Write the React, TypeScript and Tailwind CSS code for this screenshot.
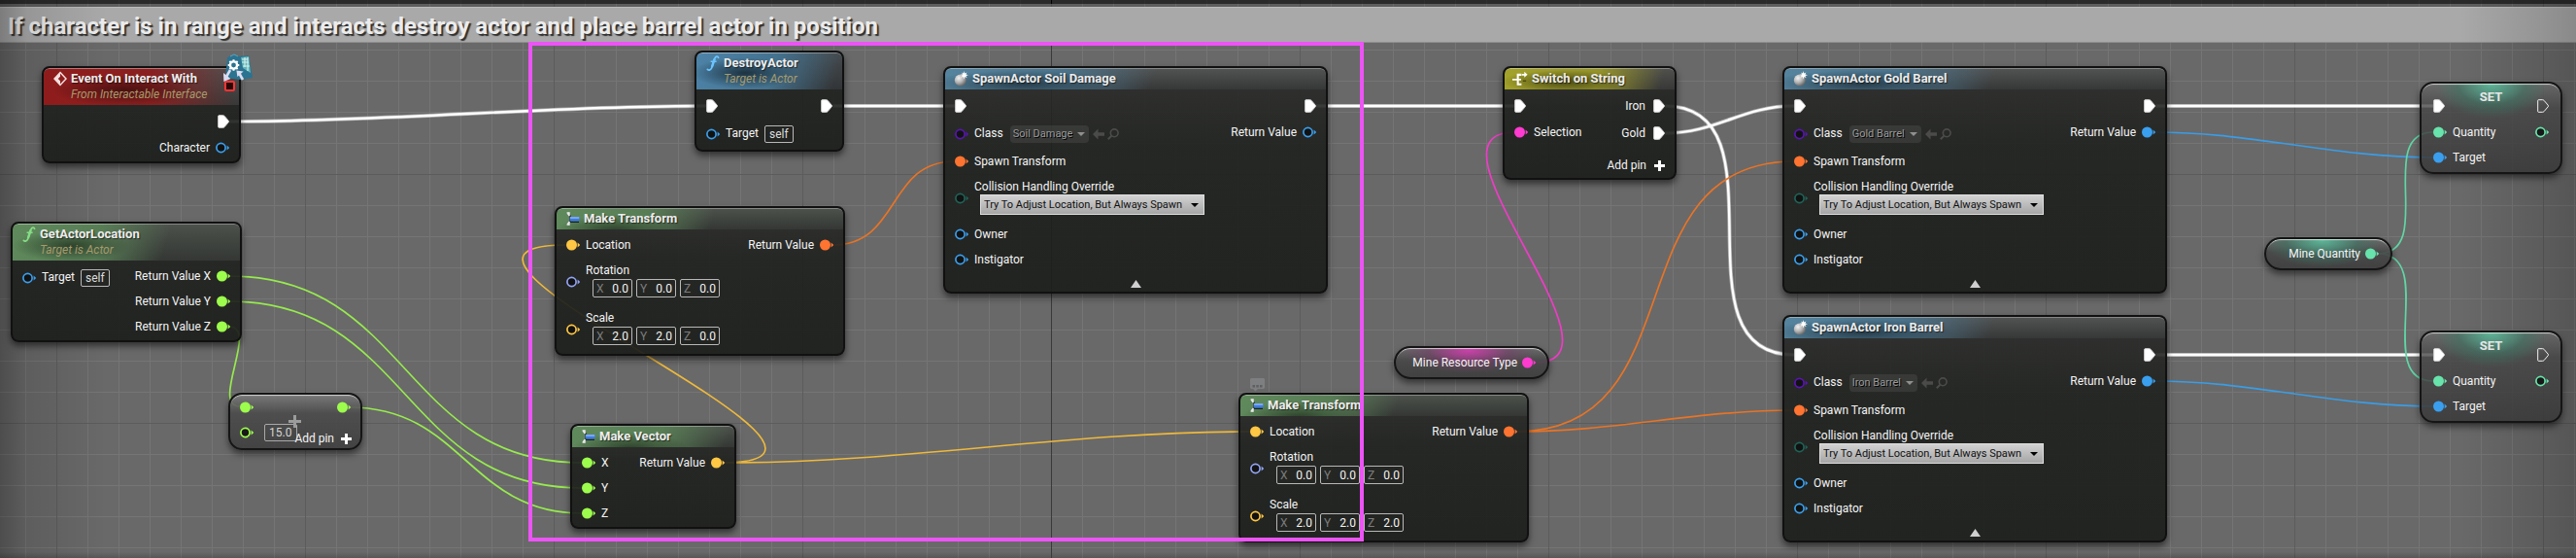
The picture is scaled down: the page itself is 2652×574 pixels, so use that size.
import React, { useId } from "react";

type Kind =
  | "object"
  | "float"
  | "vector"
  | "rotator"
  | "transform"
  | "string"
  | "int"
  | "class"
  | "enum";

const pinColor: Record<Kind, string> = {
  object: "#3a9fee",
  float: "#9dfd4d",
  vector: "#ffc744",
  rotator: "#93a4f4",
  transform: "#ff7430",
  string: "#ff3bd0",
  int: "#68e3ab",
  class: "#5a14b4",
  enum: "#1f6358",
};

const wireColor: Record<string, string> = {
  exec: "#ffffff",
  object: "#3a9de6",
  float: "#97ea4f",
  vector: "#eeb93c",
  transform: "#e87426",
  string: "#ee3cc6",
  int: "#60d6a6",
};

function Pin({ kind, on = false }: { kind: Kind; on?: boolean }) {
  const c = pinColor[kind];
  return (
    <svg className="h-3 w-[14px] shrink-0" viewBox="0 0 14 12" aria-hidden="true">
      {on ? (
        <circle cx="5.5" cy="6" r="5.5" fill={c} />
      ) : (
        <circle cx="5.5" cy="6" r="4.6" fill="#0c0e0d" fillOpacity="0.8" stroke={c} strokeWidth="1.7" />
      )}
      <path d="M11.6 3.4 14.2 6 11.6 8.6Z" fill={c} />
    </svg>
  );
}

function Exec({ on = true, out = false }: { on?: boolean; out?: boolean }) {
  return (
    <span className={out ? "flex w-[14px] shrink-0 justify-end" : "flex w-[14px] shrink-0"}>
      <svg className="h-[14px] w-3 shrink-0" viewBox="0 0 12 14" aria-hidden="true">
        <path
          d="M1.4.7H5.6Q6.4.7 7 1.3L11.2 6.2Q11.8 7 11.2 7.8L7 12.7Q6.4 13.3 5.6 13.3H1.4Q.7 13.3.7 12.6V1.4Q.7.7 1.4.7Z"
          fill={on ? "#ffffff" : "none"}
          stroke={on ? "#d8d8d8" : "#f4f4f4"}
          strokeWidth="1"
        />
      </svg>
    </span>
  );
}

function Plus() {
  return (
    <svg className="size-[11px] shrink-0" viewBox="0 0 11 11" aria-hidden="true">
      <path d="M4 0H7V4H11V7H7V11H4V7H0V4H4Z" fill="#ffffff" />
    </svg>
  );
}

function FunctionIcon({ className }: { className: string }) {
  return (
    <svg className={"h-4 w-[14px] shrink-0 " + className} viewBox="0 0 14 16" fill="none" stroke="currentColor" aria-hidden="true">
      <path d="M12.6 2.2C12 .6 9.8.5 8.8 3.2L5.8 12.6C5 15.2 2.6 15.6 1.4 14.4" strokeWidth="1.8" strokeLinecap="round" />
      <path d="M8.6 3.6 5.9 12" strokeWidth="2.4" />
      <path d="M4.6 6.2H10.6" strokeWidth="1.4" />
    </svg>
  );
}

function EventIcon() {
  return (
    <svg className="h-4 w-[14px] shrink-0" viewBox="0 0 14 16" aria-hidden="true">
      <path d="M7 1.6 13 8 7 14.4 1 8Z" fill="none" stroke="#f4dede" strokeWidth="1.5" />
      <path d="M7 1.6 1 8 7 14.4 7 10.2 4.8 8 7 5.8Z" fill="#f4dede" />
    </svg>
  );
}

function StructIcon() {
  return (
    <svg className="h-4 w-[14px] shrink-0" viewBox="0 0 14 16" aria-hidden="true">
      <path d="M1 2 4 5V8M1 14 4 11V8" stroke="#2c3436" strokeWidth="1.6" fill="none" />
      <path d="M.6 2H3V4.4M.6 14H3V11.6" stroke="#f3f3f3" strokeWidth="1.4" fill="none" />
      <path d="M1 2.3 3.4 5M1 13.7 3.4 11" stroke="#f3f3f3" strokeWidth="1.2" />
      <rect x="3.6" y="6" width="10" height="4.4" rx="1" fill="#3f7be0" />
      <rect x="3.8" y="6.2" width="9.6" height="1.5" rx=".7" fill="#8fb6ff" />
      <path d="M4 11.3H13" stroke="#16202c" strokeWidth="1.2" />
    </svg>
  );
}

function SpawnIcon() {
  const id = useId();
  return (
    <svg className="h-4 w-[14px] shrink-0 overflow-visible" viewBox="0 0 14 16" aria-hidden="true">
      <defs>
        <radialGradient id={id} cx="35%" cy="32%" r="70%">
          <stop offset="0" stopColor="#f2f2f2" />
          <stop offset=".55" stopColor="#b4b4b4" />
          <stop offset="1" stopColor="#6a6a6a" />
        </radialGradient>
      </defs>
      <circle cx="5.8" cy="9.4" r="6" fill={`url(#${id})`} />
      <path
        transform="translate(-1)"
        d="M10.6 0 11.3 2.6 13.4 1.4 12.4 3.6 15 4.2 12.5 5.1 13.6 7.2 11.3 6.1 10.5 8.4 9.7 6 7.6 6.8 8.8 4.8 6.8 3.8 9 3.4 8.2 1.4 10 2.6Z"
        fill="#ffffff"
      />
    </svg>
  );
}

function SwitchIcon() {
  return (
    <svg className="-ml-[2px] h-4 w-4 shrink-0" viewBox="0 0 17 16" fill="none" stroke="#ffffff" aria-hidden="true">
      <path d="M0 9H9.5" strokeWidth="1.8" />
      <path d="M10 3.6H6V14.2H10" strokeWidth="2.2" />
      <path d="M10.5 3.6H14" strokeWidth="1.8" />
      <path d="M13 .4 16.6 3.6 13 6.8Z" fill="#ffffff" stroke="none" />
      <path d="M11.5 10.4H15" stroke="#4e4c12" strokeWidth="1.6" />
    </svg>
  );
}

type Tone = "red" | "green" | "blue" | "spawn" | "yellow";

const toneClass: Record<Tone, string> = {
  red: "bg-[radial-gradient(ellipse_75px_16px_at_84px_22px,#3c0d0dd0,transparent),linear-gradient(to_right,#8f1c1c,#8a2020_110px,#3f3f3f00_198px),linear-gradient(#505050,#383838)]",
  green:
    "bg-[radial-gradient(ellipse_60px_16px_at_60px_22px,#1f2e1ec0,transparent),linear-gradient(105deg,#5f8a5c,#587d55_90px,#3f3f3f00_158px),linear-gradient(#4c514b,#343734)]",
  blue: "bg-[radial-gradient(ellipse_55px_16px_at_50px_20px,#14242ed0,transparent),linear-gradient(105deg,#4d83a8,#44728f_80px,#3f3f3f00_145px),linear-gradient(#454a4e,#323537)]",
  spawn:
    "bg-[radial-gradient(ellipse_95px_14px_at_80px_15px,#1c2a33c0,transparent),linear-gradient(105deg,#55849f,#4b748c_115px,#3f3f3f00_210px),linear-gradient(#515353,#363737)]",
  yellow:
    "bg-[radial-gradient(ellipse_65px_12px_at_62px_13px,#33320ec0,transparent),linear-gradient(105deg,#a3a22a,#94932a_95px,#3f3f3f00_160px),linear-gradient(#4f4f4c,#383838)]",
};

function Node({
  place,
  tone,
  icon,
  title,
  subtitle,
  children,
}: {
  place: string;
  tone: Tone;
  icon: React.ReactNode;
  title: string;
  subtitle?: string;
  children: React.ReactNode;
}) {
  return (
    <section
      className={
        "absolute overflow-hidden rounded-lg border-2 border-[#101110] bg-[linear-gradient(#2b2c2be6,#1f211ee8_35%,#1c1e1bec)] shadow-[0_4px_7px_#00000088] " +
        place
      }
    >
      <header
        className={
          "flex gap-1 rounded-t-md border-t border-t-white/40 pr-3 pl-[10px] " +
          (subtitle ? "h-[38px] " : "h-[22px] ") +
          toneClass[tone]
        }
      >
        <div className="mt-[2px] h-4">{icon}</div>
        <div className="pt-[2px]">
          <h2 className="text-[13px] leading-4 font-bold whitespace-nowrap text-[#ececec] [text-shadow:1px_1px_1px_#00000090]">{title}</h2>
          {subtitle && <p className="text-xs leading-[17px] whitespace-nowrap text-[#a79a6c] italic">{subtitle}</p>}
        </div>
      </header>
      <div className="flex justify-between px-[10px] pt-[3px] pb-px">{children}</div>
    </section>
  );
}

function Row({ h = "h-[26px]", out = false, children }: { h?: string; out?: boolean; children: React.ReactNode }) {
  return <div className={"flex items-center gap-[6px] " + (out ? "justify-end " : "") + h}>{children}</div>;
}

function Text({ children }: { children: React.ReactNode }) {
  return <span className="pb-px text-xs leading-4 whitespace-nowrap text-[#f4f4f4]">{children}</span>;
}

function Self() {
  return (
    <span className="h-[18px] rounded-xs border border-[#b8b8b8] px-1 text-xs leading-4 text-[#dcdcdc]">self</span>
  );
}

function VectorField({ name, kind, values }: { name: string; kind: Kind; values: string[] }) {
  return (
    <Row h="h-[49px]">
      <Pin kind={kind} />
      <div role="group" aria-label={name} className="flex flex-col gap-px pb-[3px]">
        <span className="text-xs leading-4 text-[#f4f4f4]">{name}</span>
        <div className="ml-[7px] flex gap-1">
          {["X", "Y", "Z"].map((axis, i) => (
            <label
              key={axis}
              className="flex h-[19px] w-[41px] items-center rounded-xs border border-[#b8b8b8] px-[3px] text-xs leading-4 text-[#7c7c7c]"
            >
              {axis}
              <input
                className="w-full min-w-0 bg-transparent text-right text-[#f4f4f4] outline-none"
                defaultValue={values[i]}
                inputMode="decimal"
              />
            </label>
          ))}
        </div>
      </div>
    </Row>
  );
}

function MakeTransform({ place, scale }: { place: string; scale: string[] }) {
  return (
    <Node place={place} tone="green" icon={<StructIcon />} title="Make Transform">
      <div>
        <Row>
          <Pin kind="vector" on />
          <Text>Location</Text>
        </Row>
        <VectorField name="Rotation" kind="rotator" values={["0.0", "0.0", "0.0"]} />
        <VectorField name="Scale" kind="vector" values={scale} />
      </div>
      <div>
        <Row out>
          <Text>Return Value</Text>
          <Pin kind="transform" on />
        </Row>
      </div>
    </Node>
  );
}

function SpawnActor({ place, actor, linked = false }: { place: string; actor: string; linked?: boolean }) {
  const id = useId();
  return (
    <Node place={place} tone="spawn" icon={<SpawnIcon />} title={`SpawnActor ${actor}`}>
      <div className="w-full">
        <div className="flex justify-between">
          <div>
            <Row h="h-7">
              <Exec />
            </Row>
            <Row h="h-[30px]">
              <Pin kind="class" />
              <label htmlFor={id + "c"} className="pb-[3px] text-xs leading-4 text-[#f4f4f4]">
                Class
              </label>
              <div className="relative ml-[1px] flex h-[18px] items-center rounded-sm bg-white/8">
                <select
                  id={id + "c"}
                  disabled
                  className="appearance-none bg-transparent pr-4 pl-[3px] text-[11px] leading-4 text-[#9a9a9a] opacity-100 [text-shadow:1px_1px_0_#000]"
                >
                  <option>{actor}</option>
                </select>
                <svg className="pointer-events-none absolute right-1 h-1 w-2" viewBox="0 0 8 4" aria-hidden="true">
                  <path d="M0 0H8L4 4Z" fill="#8f8f8f" />
                </svg>
              </div>
              <button type="button" disabled aria-label="Use selected asset" className="-ml-[2px]">
                <svg className="h-3 w-3" viewBox="0 0 12 12" aria-hidden="true">
                  <path d="M0 6 5.5.6V4.2H12V7.8H5.5V11.4Z" fill="#4b4c4a" />
                </svg>
              </button>
              <button type="button" disabled aria-label="Browse to asset" className="-ml-[3px]">
                <svg className="h-3 w-3" viewBox="0 0 12 12" fill="none" stroke="#4b4c4a" aria-hidden="true">
                  <circle cx="7.2" cy="4.8" r="3.9" strokeWidth="1.6" />
                  <path d="M4.4 7.6.8 11.2" strokeWidth="2" />
                </svg>
              </button>
            </Row>
            <Row>
              <Pin kind="transform" on />
              <Text>Spawn Transform</Text>
            </Row>
            <Row h="h-[49px]">
              <Pin kind="enum" />
              <div className="flex flex-col pb-[2px]">
                <label htmlFor={id + "h"} className="text-xs leading-4 whitespace-nowrap text-[#f4f4f4]">
                  Collision Handling Override
                </label>
                <div className="relative ml-[6px] flex h-[21px] w-[231px] items-center border border-[#dedede] bg-[linear-gradient(#d2d2d2,#a6a6a6)]">
                  <select
                    id={id + "h"}
                    className="w-full appearance-none bg-transparent pl-[3px] text-[11px] leading-4 text-[#101010]"
                  >
                    <option>Try To Adjust Location, But Always Spawn</option>
                  </select>
                  <svg className="pointer-events-none absolute right-[5px] h-1 w-2" viewBox="0 0 8 4" aria-hidden="true">
                    <path d="M0 0H8L4 4Z" fill="#000000" />
                  </svg>
                </div>
              </div>
            </Row>
            <Row>
              <Pin kind="object" />
              <Text>Owner</Text>
            </Row>
            <Row>
              <Pin kind="object" />
              <Text>Instigator</Text>
            </Row>
          </div>
          <div>
            <Row h="h-7" out>
              <Exec out />
            </Row>
            <Row out>
              <Text>Return Value</Text>
              <Pin kind="object" on={linked} />
            </Row>
          </div>
        </div>
        <div className="flex h-[19px] justify-center pt-2">
          <button type="button" aria-label="Hide advanced pins" className="h-2">
            <svg className="h-2 w-[11px]" viewBox="0 0 11 8" aria-hidden="true">
              <path d="M5.5 0 11 8H0Z" fill="#cfcfcf" />
            </svg>
          </button>
        </div>
      </div>
    </Node>
  );
}

const glass =
  "absolute overflow-hidden border-2 border-[#151515] shadow-[0_4px_7px_#00000080,inset_0_2px_1px_-1px_#ffffffb0] ";

function VariableNode({ place, kind, name }: { place: string; kind: "string" | "int"; name: string }) {
  return (
    <section
      className={
        glass +
        "flex h-[34px] items-center justify-end gap-[5px] rounded-full pr-[12px] " +
        (kind === "string"
          ? "bg-[radial-gradient(ellipse_44%_75%_at_48%_10%,#d63cb2e0,#7a3a6c80_60%,transparent),linear-gradient(#6a6a6aee,#464646e6_45%,#3d3d3de6)] "
          : "bg-[radial-gradient(ellipse_48%_90%_at_45%_5%,#5cc09fe0,#3a7a6680_60%,transparent),linear-gradient(#6a6a6aee,#464646e6_45%,#3d3d3de6)] ") +
        place
      }
    >
      <Text>{name}</Text>
      <Pin kind={kind} on />
    </section>
  );
}

function SetNode({ place }: { place: string }) {
  return (
    <section
      className={
        glass +
        "h-[95px] w-[147px] rounded-[14px] bg-[radial-gradient(ellipse_58px_36px_at_72px_0px,#5cc09fe0,#3a7a6680_60%,transparent),linear-gradient(#6a6a6ad0,#464646d0_28%,#383838d8)] " +
        place
      }
    >
      <h2 className="absolute inset-x-0 top-[6px] text-center text-[13px] leading-4 font-bold text-[#e6e6e6]">SET</h2>
      <div className="flex justify-between px-3 pt-[9px]">
        <div>
          <Row h="h-7">
            <Exec />
          </Row>
          <Row>
            <Pin kind="int" on />
            <Text>Quantity</Text>
          </Row>
          <Row>
            <Pin kind="object" on />
            <Text>Target</Text>
          </Row>
        </div>
        <div>
          <Row h="h-7" out>
            <Exec on={false} out />
          </Row>
          <Row out>
            <Pin kind="int" />
          </Row>
        </div>
      </div>
    </section>
  );
}

function AddNode() {
  return (
    <section
      className={
        glass +
        "top-[404px] left-[235px] h-[59px] w-[138px] rounded-[14px] bg-[linear-gradient(#7a7a7ae8,#4b4b4be6_35%,#3f3f3fe6)] px-[10px]"
      }
    >
      <svg className="absolute top-[21px] left-[60px] size-[13px]" viewBox="0 0 13 13" aria-hidden="true">
        <path d="M5 0H8V5H13V8H8V13H5V8H0V5H5Z" fill="#9c9c9c" />
      </svg>
      <div className="flex justify-between">
        <Row>
          <Pin kind="float" on />
        </Row>
        <Row>
          <Pin kind="float" on />
        </Row>
      </div>
      <div className="flex items-center">
        <Row>
          <Pin kind="float" />
        </Row>
        <input
          aria-label="Addend"
          defaultValue="15.0"
          className="ml-[11px] h-[18px] w-[34px] rounded-xs border border-[#a8a8a8] bg-transparent px-1 text-xs leading-4 text-[#d4d4d4]"
        />
      </div>
      <button
        type="button"
        className="absolute right-[9px] bottom-[2px] flex items-center gap-[7px] text-xs leading-4 text-[#f4f4f4]"
      >
        Add pin
        <Plus />
      </button>
    </section>
  );
}

type Wire = [string, number, number, number, number];

const wires: Wire[] = [
  ["exec", 236, 125, 727, 109],
  ["exec", 857, 109, 983, 109],
  ["exec", 1355, 109, 1559, 109],
  ["exec", 1714, 137, 1847, 109],
  ["exec", 1714, 109, 1847, 365],
  ["exec", 2219, 109, 2505, 109],
  ["exec", 2219, 365, 2505, 365],
  ["float", 236, 284, 599, 476],
  ["float", 236, 310, 599, 502],
  ["float", 236, 336, 247, 418],
  ["float", 360, 419, 599, 528],
  ["vector", 743, 476, 583, 252],
  ["vector", 745, 476, 1287, 444],
  ["transform", 857, 252, 983, 166],
  ["transform", 1561, 444, 1847, 166],
  ["transform", 1561, 444, 1847, 422],
  ["string", 1580, 373, 1559, 136],
  ["object", 2218, 136, 2505, 162],
  ["object", 2218, 392, 2505, 418],
  ["int", 2448, 261, 2505, 136],
  ["int", 2448, 261, 2505, 392],
];

function wirePath(x1: number, y1: number, x2: number, y2: number) {
  const dx = x2 - x1;
  const dy = Math.abs(y2 - y1);
  const h = dx >= 0 ? (dx + dy) / 3 : Math.min(-dx, 200) * 0.7 + Math.min(dy, 200) * 0.46;
  return `M${x1} ${y1}C${x1 + h} ${y1} ${x2 - h} ${y2} ${x2} ${y2}`;
}

function Wires() {
  return (
    <svg className="pointer-events-none absolute top-0 left-0 h-full w-full overflow-visible" fill="none" aria-hidden="true">
      {wires.map(([kind, x1, y1, x2, y2], i) => (
        <g key={i}>
          {kind === "exec" && <path d={wirePath(x1, y1, x2, y2)} stroke="#ffffff" strokeOpacity=".45" strokeWidth="4" />}
          <path d={wirePath(x1, y1, x2, y2)} stroke={wireColor[kind]} strokeWidth={kind === "exec" ? 2.4 : 1.7} />
        </g>
      ))}
    </svg>
  );
}

function EventBadge() {
  return (
    <svg className="absolute top-[55px] left-[228px] h-[31px] w-8" viewBox="0 0 32 31" aria-hidden="true">
      <path d="M6 4 13 1 17 3 28 2 32 25 20 27 4 25Z" fill="#2b7390" />
      <path d="M20 4 28 3 30 20 22 15Z" fill="#5fb4b8" />
      <path d="M21 6H27M21 9H28M24 4V14M22 13H29M27 4V18" stroke="#d8f0ee" strokeWidth="1.1" />
      <path d="M9 3 13 1 17 3" stroke="#58a9c0" strokeWidth="1" fill="none" />
      <circle cx="12.5" cy="12" r="3.6" fill="none" stroke="#ffffff" strokeWidth="2.4" />
      <path
        d="M12.5 6.2V8.4M12.5 15.6V17.8M6.7 12H8.9M16.1 12H18.3M8.4 7.9 10 9.5M15 14.5 16.6 16.1M16.6 7.9 15 9.5M10 14.5 8.4 16.1"
        stroke="#ffffff"
        strokeWidth="2"
      />
      <path d="M9 17 5 24" stroke="#dcdcf0" strokeWidth="2.6" />
      <path d="M2 20 2.4 29 9.4 26Z" fill="#dcdcf0" />
      <path d="M18 20 22 27" stroke="#dcdcf0" strokeWidth="2.6" />
      <path d="M15.4 17.4 22.6 18.6 16.4 24Z" fill="#dcdcf0" />
    </svg>
  );
}

export default function App() {
  return (
    <main className="relative flex min-h-screen w-full flex-col overflow-hidden bg-[#696969] bg-[linear-gradient(to_right,#5c5c5c_1px,transparent_1px),linear-gradient(to_bottom,#5c5c5c_1px,transparent_1px),linear-gradient(to_right,#757575_1px,transparent_1px),linear-gradient(to_bottom,#757575_1px,transparent_1px)] bg-[size:256px_256px,256px_256px,32px_32px,32px_32px] bg-[position:58px_0px,0px_179px,26px_0px,0px_19px] font-['Roboto','Noto_Sans',sans-serif]">
      <div className="h-1 bg-black/60" />
      <div className="h-[3px] bg-black/10" />
      <h1 className="h-[37px] overflow-hidden border-t border-b border-t-[#bcbcbc] border-b-[#909090] bg-[#a9a9a9] pl-2 text-[24px] leading-[38px] font-bold whitespace-nowrap text-[#ececec] [text-shadow:2px_2px_1px_#303030]">
        If character is in range and interacts destroy actor and place barrel actor in position
      </h1>

      <div className="pointer-events-none absolute inset-0 bg-[linear-gradient(to_right,#00000044,#0000001c_28px,transparent_110px),linear-gradient(to_left,#00000030,#00000020_35px,transparent_120px),linear-gradient(to_top,#0000002c,transparent_6px)]" />
      <div className="pointer-events-none absolute top-[44px] bottom-0 left-[1082px] w-px bg-[#3a3a3a]" />
      <div className="pointer-events-none absolute top-0 left-[1082px] h-1 w-px bg-black" />

      <Wires />

      <Node
        place="top-[68px] left-[43px] w-[205px]"
        tone="red"
        icon={<EventIcon />}
        title="Event On Interact With"
        subtitle="From Interactable Interface"
      >
        <div />
        <div>
          <Row h="h-7" out>
            <Exec out />
          </Row>
          <Row out>
            <Text>Character</Text>
            <Pin kind="object" />
          </Row>
        </div>
      </Node>
      <div className="absolute top-[83px] left-[231px] size-[11px] rounded-xs border-2 border-[#fb3434] bg-[#240808]" />
      <EventBadge />

      <Node
        place="top-[228px] left-[11px] w-[238px]"
        tone="green"
        icon={<FunctionIcon className="text-[#86dc86]" />}
        title="GetActorLocation"
        subtitle="Target is Actor"
      >
        <Row h="h-[30px]">
          <Pin kind="object" />
          <span className="pb-[3px] text-xs leading-4 text-[#f4f4f4]">Target</span>
          <Self />
        </Row>
        <div>
          {["X", "Y", "Z"].map((axis) => (
            <Row key={axis} out>
              <Text>Return Value {axis}</Text>
              <Pin kind="float" on />
            </Row>
          ))}
        </div>
      </Node>

      <AddNode />

      <Node
        place="top-[52px] left-[715px] w-[154px]"
        tone="blue"
        icon={<FunctionIcon className="text-[#6cc4ff]" />}
        title="DestroyActor"
        subtitle="Target is Actor"
      >
        <div>
          <Row h="h-7">
            <Exec />
          </Row>
          <Row h="h-[30px]">
            <Pin kind="object" />
            <span className="pb-[3px] text-xs leading-4 text-[#f4f4f4]">Target</span>
            <Self />
          </Row>
        </div>
        <div>
          <Row h="h-7" out>
            <Exec out />
          </Row>
        </div>
      </Node>

      <MakeTransform place="top-[212px] left-[571px] w-[299px]" scale={["2.0", "2.0", "0.0"]} />

      <Node place="top-[436px] left-[587px] w-[171px]" tone="green" icon={<StructIcon />} title="Make Vector">
        <div>
          {["X", "Y", "Z"].map((axis) => (
            <Row key={axis}>
              <Pin kind="float" on />
              <Text>{axis}</Text>
            </Row>
          ))}
        </div>
        <div>
          <Row out>
            <Text>Return Value</Text>
            <Pin kind="vector" on />
          </Row>
        </div>
      </Node>

      <SpawnActor place="top-[68px] left-[971px] w-[396px]" actor="Soil Damage" />

      <svg className="absolute top-[389px] left-[1287px] h-[14px] w-[15px]" viewBox="0 0 15 14" aria-hidden="true">
        <path d="M1 0H14L15 1V10L14 11H8L5.5 13.5 3 11H1L0 10V1Z" fill="#7e7f81" />
        <path d="M2.5 7H5V9.5H2.5ZM6.3 7H8.8V9.5H6.3ZM10 7H12.5V9.5H10Z" fill="#5e5f60" />
      </svg>
      <MakeTransform place="top-[404px] left-[1275px] w-[299px]" scale={["2.0", "2.0", "2.0"]} />

      <VariableNode place="top-[356px] left-[1435px] w-[160px]" kind="string" name="Mine Resource Type" />

      <Node place="top-[68px] left-[1547px] w-[179px]" tone="yellow" icon={<SwitchIcon />} title="Switch on String">
        <div>
          <Row h="h-7">
            <Exec />
          </Row>
          <Row>
            <Pin kind="string" on />
            <Text>Selection</Text>
          </Row>
        </div>
        <div>
          <Row h="h-7" out>
            <Text>Iron</Text>
            <Exec out />
          </Row>
          <Row h="h-7" out>
            <Text>Gold</Text>
            <Exec out />
          </Row>
          <button
            type="button"
            className="mt-[9px] mb-[2px] flex h-5 items-center gap-2 text-xs leading-4 whitespace-nowrap text-[#f4f4f4]"
          >
            Add pin
            <Plus />
          </button>
        </div>
      </Node>

      <SpawnActor place="top-[68px] left-[1835px] w-[396px]" actor="Gold Barrel" linked />
      <SpawnActor place="top-[324px] left-[1835px] w-[396px]" actor="Iron Barrel" linked />

      <VariableNode place="top-[244px] left-[2331px] w-[132px]" kind="int" name="Mine Quantity" />
      <SetNode place="top-[84px] left-[2491px]" />
      <SetNode place="top-[340px] left-[2491px]" />

      <div className="pointer-events-none absolute top-[43px] left-[544px] h-[514px] w-[860px] border-4 border-[#ec54f5]" />
    </main>
  );
}
